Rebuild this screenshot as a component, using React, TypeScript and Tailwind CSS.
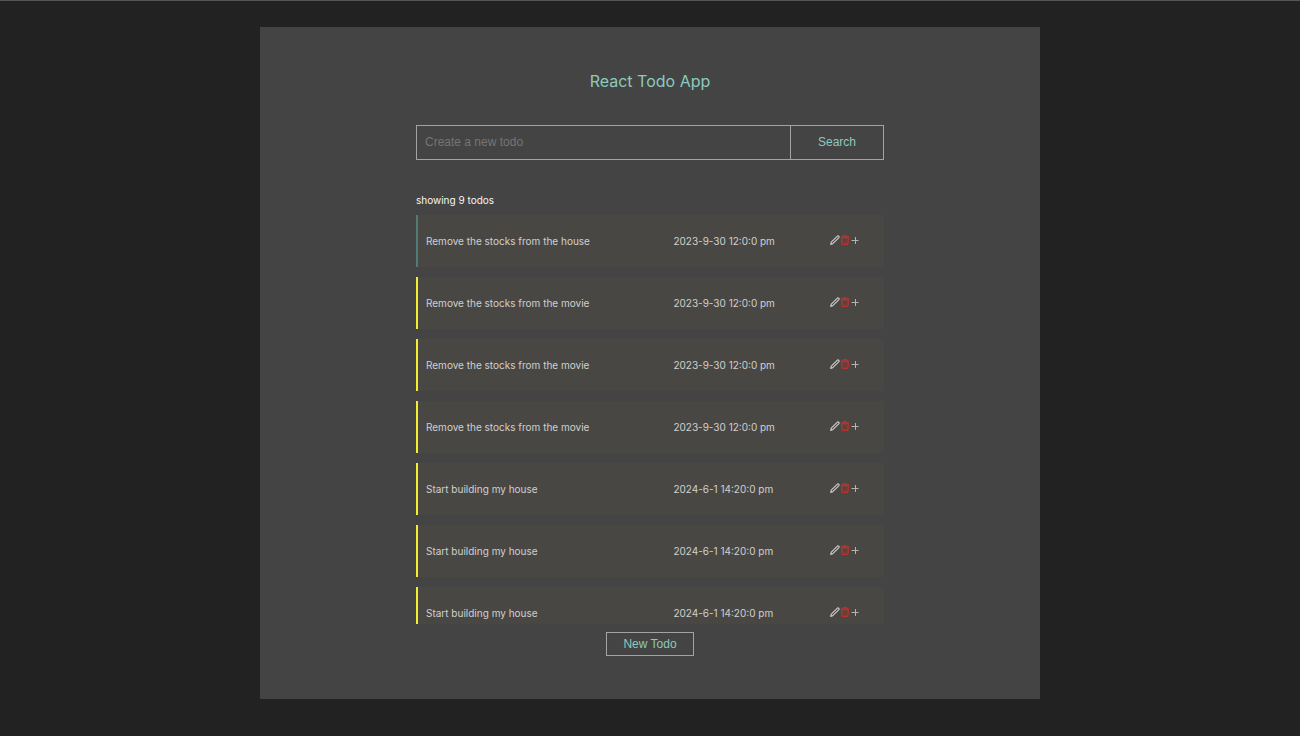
import { useState } from "react";

type Todo = { id: number; title: string; due: string; done: boolean };

const house = "Remove the stocks from the house";
const movie = "Remove the stocks from the movie";
const build = "Start building my house";
const autumn = "2023-9-30 12:0:0 pm";
const summer = "2024-6-1 14:20:0 pm";

const todos: Todo[] = [
  { id: 1, title: house, due: autumn, done: true },
  { id: 2, title: movie, due: autumn, done: false },
  { id: 3, title: movie, due: autumn, done: false },
  { id: 4, title: movie, due: autumn, done: false },
  { id: 5, title: build, due: summer, done: false },
  { id: 6, title: build, due: summer, done: false },
  { id: 7, title: build, due: summer, done: false },
  { id: 8, title: build, due: summer, done: false },
  { id: 9, title: build, due: summer, done: false },
];

function PencilIcon() {
  return (
    <svg width="10" height="10" viewBox="0 0 20 20" fill="none" stroke="currentColor" strokeWidth="2.4" strokeLinejoin="round">
      <path d="M1.4 18.600 2.600 14.400 14.800 2.200a2.200 2.200 0 0 1 3 3L5.600 17.400Z" />
    </svg>
  );
}

function TrashIcon() {
  return (
    <svg width="10" height="10" viewBox="0 0 20 20" fill="none" stroke="currentColor" strokeWidth="2" strokeLinejoin="round">
      <path d="M1.500 4h17M6.500 4V1.200h7V4" />
      <path d="M3 4.500h14l-1 14.300H4Z" fill="currentColor" fillOpacity="0.35" />
      <path d="M8 8.500v6.500M12 8.500v6.500" stroke="#6e2f2c" strokeWidth="1.500" />
    </svg>
  );
}

function PlusIcon() {
  return (
    <svg width="10" height="10" viewBox="0 0 10 10" fill="none" stroke="currentColor" strokeWidth="1">
      <path d="M1.500 5.500h7M5.500 2v7" />
    </svg>
  );
}

function TodoRow({ todo }: { todo: Todo }) {
  return (
    <li
      className={`flex h-[52px] shrink-0 items-center border-l-2 bg-[#494744] pl-2 pr-6 text-[10px] text-[#d0d0ce] ${
        todo.done ? "border-[#527a75]" : "border-[#f5ee30]"
      }`}
    >
      <span className="w-[57%]">{todo.title}</span>
      <span className="grow">{todo.due}</span>
      <div className="flex items-center pb-0.5">
        <button type="button" aria-label="Edit todo" className="text-[#c8c8c6]">
          <PencilIcon />
        </button>
        <button type="button" aria-label="Delete todo" className="text-[#bc3430]">
          <TrashIcon />
        </button>
        <button type="button" aria-label="Add to todo" className="text-[#b4b4b2]">
          <PlusIcon />
        </button>
      </div>
    </li>
  );
}

export default function App() {
  const [query, setQuery] = useState("");
  const visible = todos.filter((t) => t.title.toLowerCase().includes(query.toLowerCase()));

  return (
    <div className="min-h-screen border-t border-[#56565a] bg-[#222222] pt-[26px] font-['Inter',sans-serif]">
      <main className="mx-auto flex w-3/5 flex-col items-center bg-[#444444] pt-10 pb-[43px]">
        <h1 className="text-base leading-7 text-[#8ccabf]">React Todo App</h1>
        <form
          className="mt-[30px] flex h-[35px] w-3/5 border border-[#a3a3a3] font-['Liberation_Sans',sans-serif]"
          onSubmit={(e) => e.preventDefault()}
        >
          <input
            aria-label="Create a new todo"
            placeholder="Create a new todo"
            value={query}
            onChange={(e) => setQuery(e.target.value)}
            className="min-w-0 grow bg-transparent px-2 pb-0.5 text-xs text-[#dddddd] outline-none placeholder:text-[#757575]"
          />
          <button type="submit" className="w-[93px] border-l border-[#a3a3a3] pb-0.5 text-xs text-[#8ccabf]">
            Search
          </button>
        </form>
        <section className="mt-[31px] w-3/5">
          <p className="pb-1.5 text-[10px] leading-[18px] text-[#f6f6f6]">showing {visible.length} todos</p>
          <ul className="flex max-h-[409px] flex-col gap-2.5 overflow-y-auto [scrollbar-width:none]">
            {visible.map((todo) => (
              <TodoRow key={todo.id} todo={todo} />
            ))}
          </ul>
        </section>
        <button
          type="button"
          className="mt-2 h-6 border border-[#a3a3a3] px-4 font-['Liberation_Sans',sans-serif] text-xs text-[#8ccabf]"
        >
          New Todo
        </button>
      </main>
    </div>
  );
}
